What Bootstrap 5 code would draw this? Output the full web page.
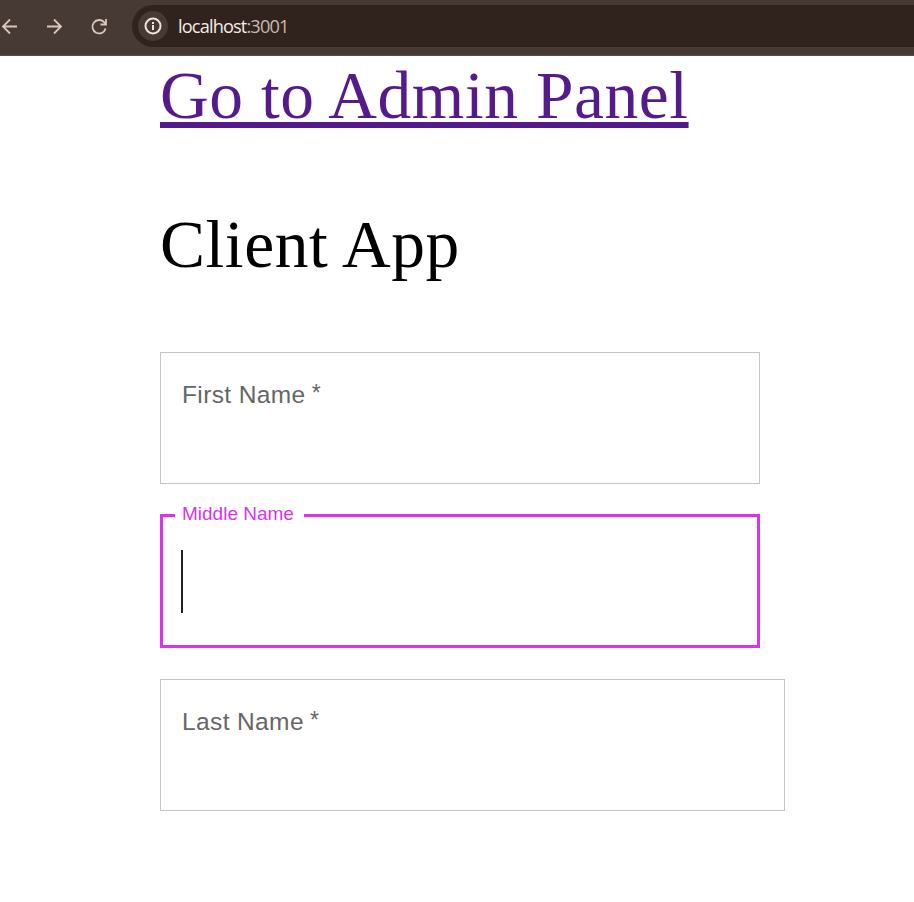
<!DOCTYPE html>
<html lang="en">
<head>
<meta charset="utf-8">
<meta name="viewport" content="width=device-width, initial-scale=1">
<title>Client App</title>
<link href="https://cdn.jsdelivr.net/npm/bootstrap@5.3.0/dist/css/bootstrap.min.css" rel="stylesheet">
<style>
body{background:#fff;height:902px;overflow:hidden}
.toolbar{height:56px;background:#473a34;border-bottom:1px solid #5a4e48}
.nav-icons{width:132px;color:#dcc5ba}
.nav-icons svg{display:block;flex:none}
.address{height:42px;background:#30231d;border-radius:21px 0 0 21px;margin-top:5px;padding-left:6px}
.site-info{width:30px;height:30px;background:#473a34;color:#efe3dd}
.url{font:18.2px/26px "Open Sans","Noto Sans",sans-serif;letter-spacing:-.86px;color:#f3ebe7;margin-left:10px}
.url span{color:#c9b9b0}
.page{padding-left:160px}
.title{font:400 67.5px/76px "Liberation Serif",serif;letter-spacing:.54px;color:#000;white-space:nowrap;margin:0}
.title a{color:#551a8b;text-decoration:underline;text-decoration-thickness:6px;text-underline-offset:4px}
.heading-top{padding-top:2px}
.heading-app{margin-top:73px}
.name-form{padding-top:69px}
.field{width:600px;height:132px;border:1px solid #c4c4c4;font:24.5px/28px "Liberation Sans",sans-serif;color:#666;padding:28px 21px;letter-spacing:.38px}
.field-wide{width:625px}
.required{font-size:23px;line-height:1;margin-left:-1px;vertical-align:2px}
.field-active{width:600px;height:143px;border:3px solid #d834eb;margin:21px 0 31px}
.field-active legend{float:none;width:129px;height:20px;font:19px/18px "Liberation Sans",sans-serif;color:#d834eb;padding:0 7px;margin:0 0 0 12px;white-space:nowrap}
.caret{width:2px;height:63px;background:#222;margin:25px 0 0 18px}
</style>
</head>
<body>
<header class="toolbar d-flex">
<nav class="nav-icons d-flex align-items-center flex-shrink-0">
<svg width="132" height="54" fill="none" stroke="currentColor" stroke-width="1.8"><path d="M17 25.500H3M10 18.500l-7 7 7 7M47 25.500h14M54 18.500l7 7-7 7"/><path d="M105.600 27.500a6.700 6.700 0 1 1-1.500-6.300l2 2M106 18v5.500h-5.500"/></svg>
</nav>
<div class="address d-flex flex-grow-1 align-items-center">
<div class="site-info rounded-circle d-flex align-items-center justify-content-center"><svg width="18" height="18" fill="none" stroke="currentColor" stroke-width="2"><circle cx="9" cy="9" r="7.5"/><path d="M9 8v5M9 5v2"/></svg></div>
<div class="url">localhost<span>:3001</span></div>
</div>
</header>
<main class="page">
<h1 class="title heading-top"><a href="#">Go to Admin Panel</a></h1>
<h2 class="title heading-app">Client App</h2>
<form class="name-form">
<div class="field">First Name <span class="required">*</span></div>
<fieldset class="field-active"><legend>Middle Name</legend><div class="caret"></div></fieldset>
<div class="field field-wide">Last Name <span class="required">*</span></div>
</form>
</main>
<script src="https://cdn.jsdelivr.net/npm/bootstrap@5.3.0/dist/js/bootstrap.bundle.min.js"></script>
</body>
</html>
